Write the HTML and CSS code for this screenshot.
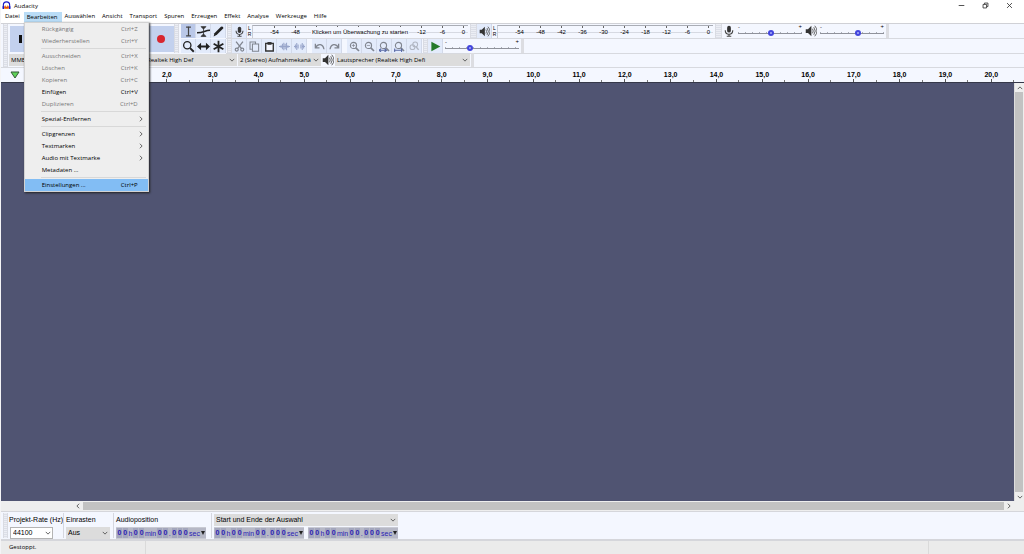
FILE: index.html
```html
<!DOCTYPE html>
<html lang="de">
<head>
<meta charset="utf-8">
<title>Audacity</title>
<link rel="stylesheet" href="styles.css">
</head>
<body>
<svg class="defs" aria-hidden="true">
  <symbol id="mic" viewBox="0 0 16 16"><rect x="5.500" y="1" width="5" height="9" rx="2.500" fill="#333"/><path d="M3 7c0 7 10 7 10 0M8 12v3M5 15h6" fill="none" stroke="#444" stroke-width="1.500"/></symbol>
  <symbol id="speaker" viewBox="0 0 16 16"><path d="M1 5.500h3L8.500 1v14L4 10.500H1z" fill="#333"/><path d="M10 5q2 3 0 6M11.700 3q4 5 0 10M13 1q6 7 0 14" fill="none" stroke="#555" stroke-width="1.200"/></symbol>
  <symbol id="chevron" viewBox="0 0 8 8"><path d="M1 2.500l3 3 3-3" fill="none" stroke="#555" stroke-width="1.200"/></symbol>
  <symbol id="lens" viewBox="0 0 16 16"><circle cx="6.500" cy="6.500" r="4.500" fill="none" stroke="currentColor" stroke-width="1.600"/><path d="M10 10l4.500 4.500" stroke="currentColor" stroke-width="2.400"/></symbol>
  <symbol id="undo" viewBox="0 0 16 16"><path d="M2 4v6h6M2.500 9.500C6 3 13 4 14.500 12" fill="none" stroke="currentColor" stroke-width="1.900"/></symbol>
</svg>

<header class="titlebar">
  <svg class="logo" viewBox="0 0 20 20"><path d="M3 13V9a7 7 0 0 1 14 0v4" fill="none" stroke="#1717c8" stroke-width="2.500"/><rect x="1" y="11" width="4" height="7" rx="2" fill="#1717c8"/><rect x="15" y="11" width="4" height="7" rx="2" fill="#1717c8"/><path d="M5 13l2-4 3 5 3-5 2 4v5H5z" fill="#f28a19"/><path d="M5 14h10" stroke="#e02b20" stroke-width="2"/></svg>
  <span class="apptitle">Audacity</span>
  <button class="win" aria-label="Minimieren"><svg viewBox="0 0 10 10"><path d="M1 5h8" stroke="#333" stroke-width="1.200"/></svg></button>
  <button class="win" aria-label="Wiederherstellen"><svg viewBox="0 0 10 10"><path d="M1.500 3.500h5v5h-5zM3.500 3V1.500h5v5H7" fill="none" stroke="#333" stroke-width="1.200"/></svg></button>
  <button class="win" aria-label="Schließen"><svg viewBox="0 0 10 10"><path d="M1.500 1.500l7 7m0-7l-7 7" stroke="#333" stroke-width="1.200"/></svg></button>
</header>

<nav class="menubar">
  <button>Datei</button>
  <div class="menuhost">
    <button class="open">Bearbeiten</button>
    <div class="menu">
      <button disabled><span>Rückgängig</span><kbd>Ctrl+Z</kbd></button>
      <button disabled><span>Wiederherstellen</span><kbd>Ctrl+Y</kbd></button>
      <hr>
      <button disabled><span>Ausschneiden</span><kbd>Ctrl+X</kbd></button>
      <button disabled><span>Löschen</span><kbd>Ctrl+K</kbd></button>
      <button disabled><span>Kopieren</span><kbd>Ctrl+C</kbd></button>
      <button><span>Einfügen</span><kbd>Ctrl+V</kbd></button>
      <button disabled><span>Duplizieren</span><kbd>Ctrl+D</kbd></button>
      <hr>
      <button><span>Spezial-Entfernen</span><svg class="sub"><use href="#chevron"/></svg></button>
      <hr>
      <button><span>Clipgrenzen</span><svg class="sub"><use href="#chevron"/></svg></button>
      <button><span>Textmarken</span><svg class="sub"><use href="#chevron"/></svg></button>
      <button><span>Audio mit Textmarke</span><svg class="sub"><use href="#chevron"/></svg></button>
      <button><span>Metadaten ...</span></button>
      <hr>
      <button class="active"><span>Einstellungen ...</span><kbd>Ctrl+P</kbd></button>
    </div>
  </div>
  <button>Auswählen</button><button>Ansicht</button><button>Transport</button><button>Spuren</button><button>Erzeugen</button><button>Effekt</button><button>Analyse</button><button>Werkzeuge</button><button>Hilfe</button>
</nav>

<section class="toolbars">
  <div class="transport">
    <i class="grip"></i>
    <button class="big" aria-label="Pause"><svg viewBox="0 0 26 26"><path d="M9 9h3v8H9zM15 9h3v8h-3z" fill="#111"/></svg></button>
    <button class="big last" aria-label="Aufnahme"><svg viewBox="0 0 26 26"><circle cx="13" cy="13" r="4" fill="#d8262f"/></svg></button>
  </div>
  <i class="grip"></i>
  <div class="tools">
    <button class="on" aria-label="Auswahl"><svg viewBox="0 0 16 16"><path d="M5 2.500h2.500L8 3l.5-.5H11M5 13.500h2.500L8 13l.5.5H11M8 3v10" fill="none" stroke="#444" stroke-width="1.500"/></svg></button>
    <button aria-label="Hüllkurve"><svg viewBox="0 0 16 16"><path d="M0 9.500q5 0 9-1.500t7-1.500" fill="none" stroke="#222" stroke-width="2"/><path d="M5 2h6L8 5zM5 14h6L8 11zM8 3v10" fill="#333" stroke="#333"/></svg></button>
    <button aria-label="Zeichnen"><svg viewBox="0 0 16 16"><path d="M2 14l1-4 8-8q3-1 3 2l-8 8z" fill="#222"/></svg></button>
    <button aria-label="Zoom"><svg><use href="#lens"/></svg></button>
    <button aria-label="Verschieben"><svg viewBox="0 0 16 16"><path d="M0 8l5-4.500v3.300h6V3.500L16 8l-5 4.500V9.200H5v3.300z" fill="#222"/></svg></button>
    <button aria-label="Multifunktion"><svg viewBox="0 0 16 16"><path d="M8 1v14M2 4.500l12 7M14 4.500l-12 7" stroke="#222" stroke-width="2.200"/></svg></button>
  </div>
  <div class="stack">
    <div class="row">
      <i class="grip"></i>
      <button class="tool" aria-label="Aufnahmepegel"><svg><use href="#mic"/></svg></button>
      <div class="lr"><span>L</span><span>R</span></div>
      <div class="meter">
        <span>-54</span><span>-48</span><span></span><span></span><span></span><span></span><span></span><span>-12</span><span>-6</span><span>0</span>
        <p class="hint">Klicken um Überwachung zu starten</p>
      </div>
      <i class="grip wide"></i>
      <button class="tool" aria-label="Wiedergabepegel"><svg><use href="#speaker"/></svg></button>
      <div class="lr"><span>L</span><span>R</span></div>
      <div class="meter">
        <span>-54</span><span>-48</span><span>-42</span><span>-36</span><span>-30</span><span>-24</span><span>-18</span><span>-12</span><span>-6</span><span>0</span>
      </div>
      <i class="grip wide"></i>
      <svg class="mixicon"><use href="#mic"/></svg>
      <div class="slider mix"><input type="range" aria-label="Aufnahmelautstärke" min="0" max="100" value="52"></div>
      <svg class="mixicon"><use href="#speaker"/></svg>
      <div class="slider mix"><input type="range" aria-label="Wiedergabelautstärke" min="0" max="100" value="60"></div>
      <i class="end"></i>
    </div>
    <div class="row edit">
      <i class="grip"></i>
      <button class="tool grey" aria-label="Ausschneiden"><svg viewBox="0 0 16 16"><path d="M3 1l8 10M13 1L5 11" stroke="currentColor" stroke-width="1.900"/><circle cx="4" cy="12.500" r="2.200" fill="none" stroke="currentColor" stroke-width="1.700"/><circle cx="12" cy="12.500" r="2.200" fill="none" stroke="currentColor" stroke-width="1.700"/></svg></button>
      <button class="tool grey" aria-label="Kopieren"><svg viewBox="0 0 16 16"><path d="M4 12H1.500v-10.500h8V4M5 4.500h9v10.500H5z" fill="none" stroke="currentColor" stroke-width="1.500"/></svg></button>
      <button class="tool" aria-label="Einfügen"><svg viewBox="0 0 16 16"><path d="M2.500 3.500h11v11h-11z" fill="#f4f6ff" stroke="#333" stroke-width="2"/><path d="M5 1.500h6v4H5z" fill="#333"/></svg></button>
      <button class="tool blue" aria-label="Trimmen"><svg viewBox="0 0 16 16"><path d="M0 8h16M5 4v8M7 2.500v11M9 4v8M11 2.500v11M3 6v4M13 6v4" stroke="currentColor" stroke-width="1.500"/></svg></button>
      <button class="tool blue" aria-label="Stille"><svg viewBox="0 0 16 16"><path d="M0 8h4M12 8h4M2 5v6M4 3v10M6 5v6M10 5v6M12 3v10M14 5v6" stroke="currentColor" stroke-width="1.500"/></svg></button>
      <i class="gap"></i>
      <button class="tool grey" aria-label="Rückgängig"><svg><use href="#undo"/></svg></button>
      <button class="tool grey flip" aria-label="Wiederholen"><svg><use href="#undo"/></svg></button>
      <i class="gap"></i>
      <button class="tool grey" aria-label="Vergrößern"><svg viewBox="0 0 16 16"><use href="#lens"/><path d="M4 6.500h5M6.500 4v5" stroke="currentColor"/></svg></button>
      <button class="tool grey" aria-label="Verkleinern"><svg viewBox="0 0 16 16"><use href="#lens"/><path d="M4 6.500h5" stroke="currentColor"/></svg></button>
      <button class="tool grey" aria-label="Auswahl einpassen"><svg viewBox="0 0 16 16"><use href="#lens"/><path d="M0 13.500h11M3 11l-3 2.500L3 16M8 11l3 2.500L8 16" fill="none" stroke="#5969a5" stroke-width="1.500"/></svg></button>
      <button class="tool grey" aria-label="Projekt einpassen"><svg viewBox="0 0 16 16"><use href="#lens"/><path d="M0 13.500h12M1 11v5M11 11v5" fill="none" stroke="#5969a5" stroke-width="1.500"/></svg></button>
      <button class="tool pale" aria-label="Zoom umschalten"><svg viewBox="0 0 16 16"><circle cx="9" cy="5" r="3.500" fill="none" stroke="currentColor" stroke-width="1.500"/><circle cx="5" cy="9" r="3.500" fill="none" stroke="currentColor" stroke-width="1.500"/><path d="M10 8l4 5" stroke="currentColor" stroke-width="2"/></svg></button>
      <i class="grip"></i>
      <button class="tool" aria-label="Wiedergabe"><svg viewBox="0 0 16 16"><path d="M2 1l13 7-13 7z" fill="#257a2b"/></svg></button>
      <div class="slider speed"><input type="range" aria-label="Geschwindigkeit" min="0" max="100" value="32"></div>
      <i class="end"></i>
    </div>
  </div>
</section>

<section class="devices">
  <i class="grip"></i>
  <div class="pick host"><select aria-label="Audio-Host"><option>MME</option></select><svg><use href="#chevron"/></svg></div>
  <div class="pick input"><select aria-label="Aufnahmegerät"><option>Realtek High Def</option></select><svg><use href="#chevron"/></svg></div>
  <div class="pick channels"><select aria-label="Aufnahmekanäle"><option>2 (Stereo) Aufnahmekanä</option></select><svg><use href="#chevron"/></svg></div>
  <svg class="mixicon"><use href="#speaker"/></svg>
  <div class="pick output"><select aria-label="Wiedergabegerät"><option>Lautsprecher (Realtek High Defi</option></select><svg><use href="#chevron"/></svg></div>
  <i class="end"></i>
</section>

<div class="ruler">
  <div class="pin"><svg viewBox="0 0 10 8"><path d="M1 1h8L5 7z" fill="#5fd35a" stroke="#345b38"/></svg></div>
  <div class="scale">
    <span>2,0</span><span>3,0</span><span>4,0</span><span>5,0</span><span>6,0</span><span>7,0</span><span>8,0</span><span>9,0</span><span>10,0</span><span>11,0</span><span>12,0</span><span>13,0</span><span>14,0</span><span>15,0</span><span>16,0</span><span>17,0</span><span>18,0</span><span>19,0</span><span>20,0</span>
  </div>
</div>

<main class="workspace">
  <div class="tracks"></div>
  <div class="vscroll">
    <button aria-label="Nach oben"><svg class="up"><use href="#chevron"/></svg></button>
    <div class="thumb"></div>
    <button aria-label="Nach unten"><svg><use href="#chevron"/></svg></button>
  </div>
</main>
<div class="hscroll">
  <button aria-label="Nach links"><svg class="left"><use href="#chevron"/></svg></button>
  <div class="thumb"></div>
  <button aria-label="Nach rechts"><svg class="right"><use href="#chevron"/></svg></button>
</div>

<section class="selection">
  <i class="grip"></i>
  <div class="field rate"><label for="rate">Projekt-Rate (Hz)</label><div class="pick white"><select id="rate"><option>44100</option></select><svg><use href="#chevron"/></svg></div></div>
  <div class="field snap"><label for="snap">Einrasten</label><div class="pick"><select id="snap"><option>Aus</option></select><svg><use href="#chevron"/></svg></div></div>
  <div class="field pos"><span class="label">Audioposition</span>
    <div class="time"><b>0</b><b>0</b><em>h</em><b>0</b><b>0</b><em>min</em><b>0</b><b>0</b><em>.</em><b>0</b><b>0</b><b>0</b><em>sec</em><button aria-label="Format"></button></div>
  </div>
  <div class="field range"><div class="pick"><select aria-label="Auswahlmodus"><option>Start und Ende der Auswahl</option></select><svg><use href="#chevron"/></svg></div>
    <div class="times">
      <div class="time"><b>0</b><b>0</b><em>h</em><b>0</b><b>0</b><em>min</em><b>0</b><b>0</b><em>.</em><b>0</b><b>0</b><b>0</b><em>sec</em><button aria-label="Format"></button></div>
      <div class="time"><b>0</b><b>0</b><em>h</em><b>0</b><b>0</b><em>min</em><b>0</b><b>0</b><em>.</em><b>0</b><b>0</b><b>0</b><em>sec</em><button aria-label="Format"></button></div>
    </div>
  </div>
</section>

<footer class="status"><span class="state">Gestoppt.</span><span class="info"></span><span class="tail"></span></footer>
</body>
</html>
```

FILE: styles.css
```css
* { box-sizing: border-box; }

body {
  margin: 0;
  height: 100vh;
  display: flex;
  flex-direction: column;
  overflow: hidden;
  border-left: 1px solid #f4f4f6;
  background: #f4f7ff;
  color: #000;
  font: 6px/12px "Open Sans", "Noto Sans", sans-serif;
}

button, select, input, kbd { font: inherit; color: inherit; margin: 0; }
button { border: 0; padding: 0; background: none; }
.defs { position: absolute; width: 0; height: 0; }
svg { display: block; flex: none; }

/* title and menu */
.titlebar { display: flex; align-items: center; height: 11px; padding-right: 3px; background: #fff; flex: none; }
.logo { width: 9px; height: 9px; margin-left: 1px; }
.apptitle { flex: 1; margin-left: 3px; }
.win { width: 24px; display: flex; justify-content: center; }
.win svg { width: 7px; height: 7px; }

.menubar { display: flex; height: 12px; padding-left: 1px; background: #fff; flex: none; }
.menubar > button, .menuhost > button { height: 11px; padding: 0 4px 0 3px; line-height: 11px; white-space: nowrap; }
.menuhost { position: relative; }
.menuhost > .open { background: #b9dcf6; }

.menu {
  position: absolute;
  z-index: 5;
  top: 11px;
  left: 0;
  width: 125px;
  border: 1px solid #d2d2d2;
  background: #eee;
  box-shadow: 1px 1px 2px #222;
}
.menu button { display: flex; align-items: center; width: 100%; height: 12px; padding: 0 10px 0 17px; text-align: left; }
.menu span { flex: 1; white-space: nowrap; }
.menu button:disabled { color: #777; }
.menu .active { background: #82bdf4; }
.menu hr { height: 1px; margin: 1px 2px 1px 16px; border: 0; background: #d8d8d8; }
.sub { width: 6px; height: 6px; transform: rotate(-90deg); margin-right: -6px; }

/* toolbars */
.grip { flex: none; width: 5px; align-self: stretch; border: 1px solid #d9dbe2; border-width: 0 1px; background: repeating-linear-gradient(#eceef4 0 1px, #dcdfe8 1px 2px); }
.grip.wide { width: 7px; }
.end { width: 3px; background: #dcdde2; align-self: stretch; }
.toolbars { display: flex; flex: none; height: 30px; border-top: 1px solid #d0d1d6; padding-left: 2px; }
.transport { display: flex; align-items: center; width: 171px; }
.big { width: 26px; height: 26px; margin-left: 2px; background: #c3d1ee; }
.big svg { width: 26px; height: 26px; }
.big.last { margin-left: auto; }
.tools { display: grid; grid-template-columns: repeat(3, 15px); grid-template-rows: repeat(2, 14px); row-gap: 1px; margin-left: 2px; }
.tools button, .tool { display: flex; align-items: center; justify-content: center; background: #e3ebfb; border-right: 1px solid #d2d9e9; }
.tools .on { background: #bac8e8; }
.tools svg { width: 13px; height: 13px; color: #222; }
.stack { flex: 1; display: flex; flex-direction: column; min-width: 0; }
.row { display: flex; align-items: center; height: 15px; border-bottom: 1px solid #d7d9df; }
.row .grip { margin-left: 1px; }
.tool { width: 15px; height: 14px; flex: none; }
.tool svg { width: 11px; height: 11px; }
.grey { color: #80858f; }
.pale { color: #b0b6c2; }
.blue { color: #98a5ca; }
.flip svg { transform: scaleX(-1); }
.gap { width: 5px; }
.lr { display: flex; flex-direction: column; width: 5px; font: 5px/6px "Liberation Sans", Arial, sans-serif; text-align: center; }

.meter {
  position: relative;
  display: grid;
  grid-template-columns: repeat(10, 21px);
  height: 13px;
  padding-left: 11px;
  margin-right: 1px;
  width: 216px;
  border-top: 1px solid #aaadb5;
  border-left: 1px solid #c9ccd5;
  background: linear-gradient(#d6d9e2, #d6d9e2) 0 6px / 100% 1px no-repeat;
  font: 6px/10px "Liberation Sans", Arial, sans-serif;
}
.meter span { display: flex; flex-direction: column; align-items: center; line-height: 9px; }
.meter span::before { content: ""; width: 1px; height: 2px; background: #666; }
.hint { position: absolute; left: 58px; top: 1px; margin: 0; padding: 0 1px; background: #f4f7ff; white-space: nowrap; }

.mixicon { width: 12px; height: 12px; margin: 0 1px; }
.slider { position: relative; height: 12px; margin: 0 2px; background: repeating-linear-gradient(90deg, #aaaeb8 0 1px, transparent 1px 7px) 0 7px / 100% 2px no-repeat; }
.slider::before, .slider::after { position: absolute; top: -1px; line-height: 6px; }
.slider::before { content: "-"; left: 0; }
.slider::after { content: "+"; right: 0; }
.slider.mix { width: 64px; }
.slider.speed { width: 74px; }
.slider input { display: block; width: 100%; height: 12px; padding-top: 5px; appearance: none; background: none; }
.slider input::-webkit-slider-runnable-track { height: 1px; background: #8f929b; }
.slider input::-webkit-slider-thumb { appearance: none; width: 6px; height: 6px; margin-top: -3px; border: 2px solid #4245dd; border-radius: 50%; background: #a8adf5; }

.pick { position: relative; height: 12px; }
.pick select { display: block; width: 100%; height: 100%; padding: 0 10px 0 2px; appearance: none; border: 0; border-radius: 0; background: #dcdcdc; line-height: 12px; }
.pick svg { position: absolute; right: 2px; top: 3px; width: 6px; height: 6px; pointer-events: none; }
.white select { background: #fff; border: 1px solid #b4b4b4; line-height: 10px; }

.devices { display: flex; align-items: center; gap: 1px; height: 15px; flex: none; padding-left: 2px; border-bottom: 1px solid #d7d9df; }
.host { width: 70px; }
.input { width: 92px; margin-left: 65px; }
.channels { width: 83px; }
.output { width: 135px; }
.devices .mixicon { margin: 0; }

/* timeline */
.ruler { display: flex; height: 15px; flex: none; padding-right: 10px; border-bottom: 1px solid #353849; }
.pin { display: flex; align-items: center; width: 143px; padding-left: 9px; }
.pin svg { width: 10px; height: 8px; }
.scale { flex: 1; display: flex; }
.scale span {
  flex: 1;
  text-align: center;
  font: bold 7px/13px "Liberation Sans", Arial, sans-serif;
  background: linear-gradient(#555, #555) 50% 100% / 1px 3px no-repeat, linear-gradient(#777, #777) 100% 100% / 1px 2px no-repeat;
}

.workspace { flex: 1; display: flex; min-height: 0; }
.tracks { flex: 1; background: #505472; }
.vscroll { width: 10px; display: flex; flex-direction: column; background: #eee; border-left: 1px solid #ddd; }
.vscroll button { height: 9px; display: flex; align-items: center; justify-content: center; }
.thumb { flex: 1; background: #c2c2c2; }
.vscroll svg, .hscroll svg { width: 6px; height: 6px; }
.vscroll .thumb { margin-right: 1px; }
.up { transform: rotate(180deg); }
.left { transform: rotate(90deg); }
.right { transform: rotate(-90deg); }
.hscroll { display: flex; height: 10px; flex: none; padding: 1px 10px 1px 72px; background: #eee; }
.hscroll button { width: 10px; display: flex; align-items: center; justify-content: center; }

/* selection bar */
.selection { display: flex; height: 30px; flex: none; padding: 1px 0 1px 2px; border-top: 1px solid #d5d6db; border-bottom: 2px solid #d5d6db; font-family: "Liberation Sans", Arial, sans-serif; }
.field { display: flex; flex-direction: column; gap: 1px; white-space: nowrap; padding-top: 1px; }
.field + .field { border-left: 1px solid #d5d7df; padding-left: 2px; }
.field label, .label { height: 12px; line-height: 12px; }
.rate { width: 54px; margin-left: 1px; }
.rate .pick { width: 43px; margin-left: 1px; }
.snap { width: 50px; }
.snap .pick { width: 44px; }
.pos { width: 98px; }
.selection .pick select, .selection label, .label { font-size: 7px; }
.times { display: flex; gap: 4px; }
.range { width: 187px; }
.time { display: flex; align-items: center; gap: 1px; width: 90px; height: 12px; padding: 0 1px; border: 1px solid #c8cad3; border-width: 1px 0; background: #b6b8c6; color: #2a20b4; font: 7px/9px "Liberation Sans", Arial, sans-serif; }
.time b { width: 5px; height: 10px; background: #a3a6bd; font-weight: bold; text-align: center; }
.time em { font-style: normal; }
.time button { margin-left: auto; border: 2px solid transparent; border-top: 4px solid #222; border-bottom: 0; }

.status { display: flex; height: 13px; flex: none; background: #ebebeb; padding-left: 8px; }
.state { width: 137px; border-right: 1px solid #dadada; }
.info { flex: 1; border-right: 1px solid #dadada; }
.tail { width: 95px; }
```
